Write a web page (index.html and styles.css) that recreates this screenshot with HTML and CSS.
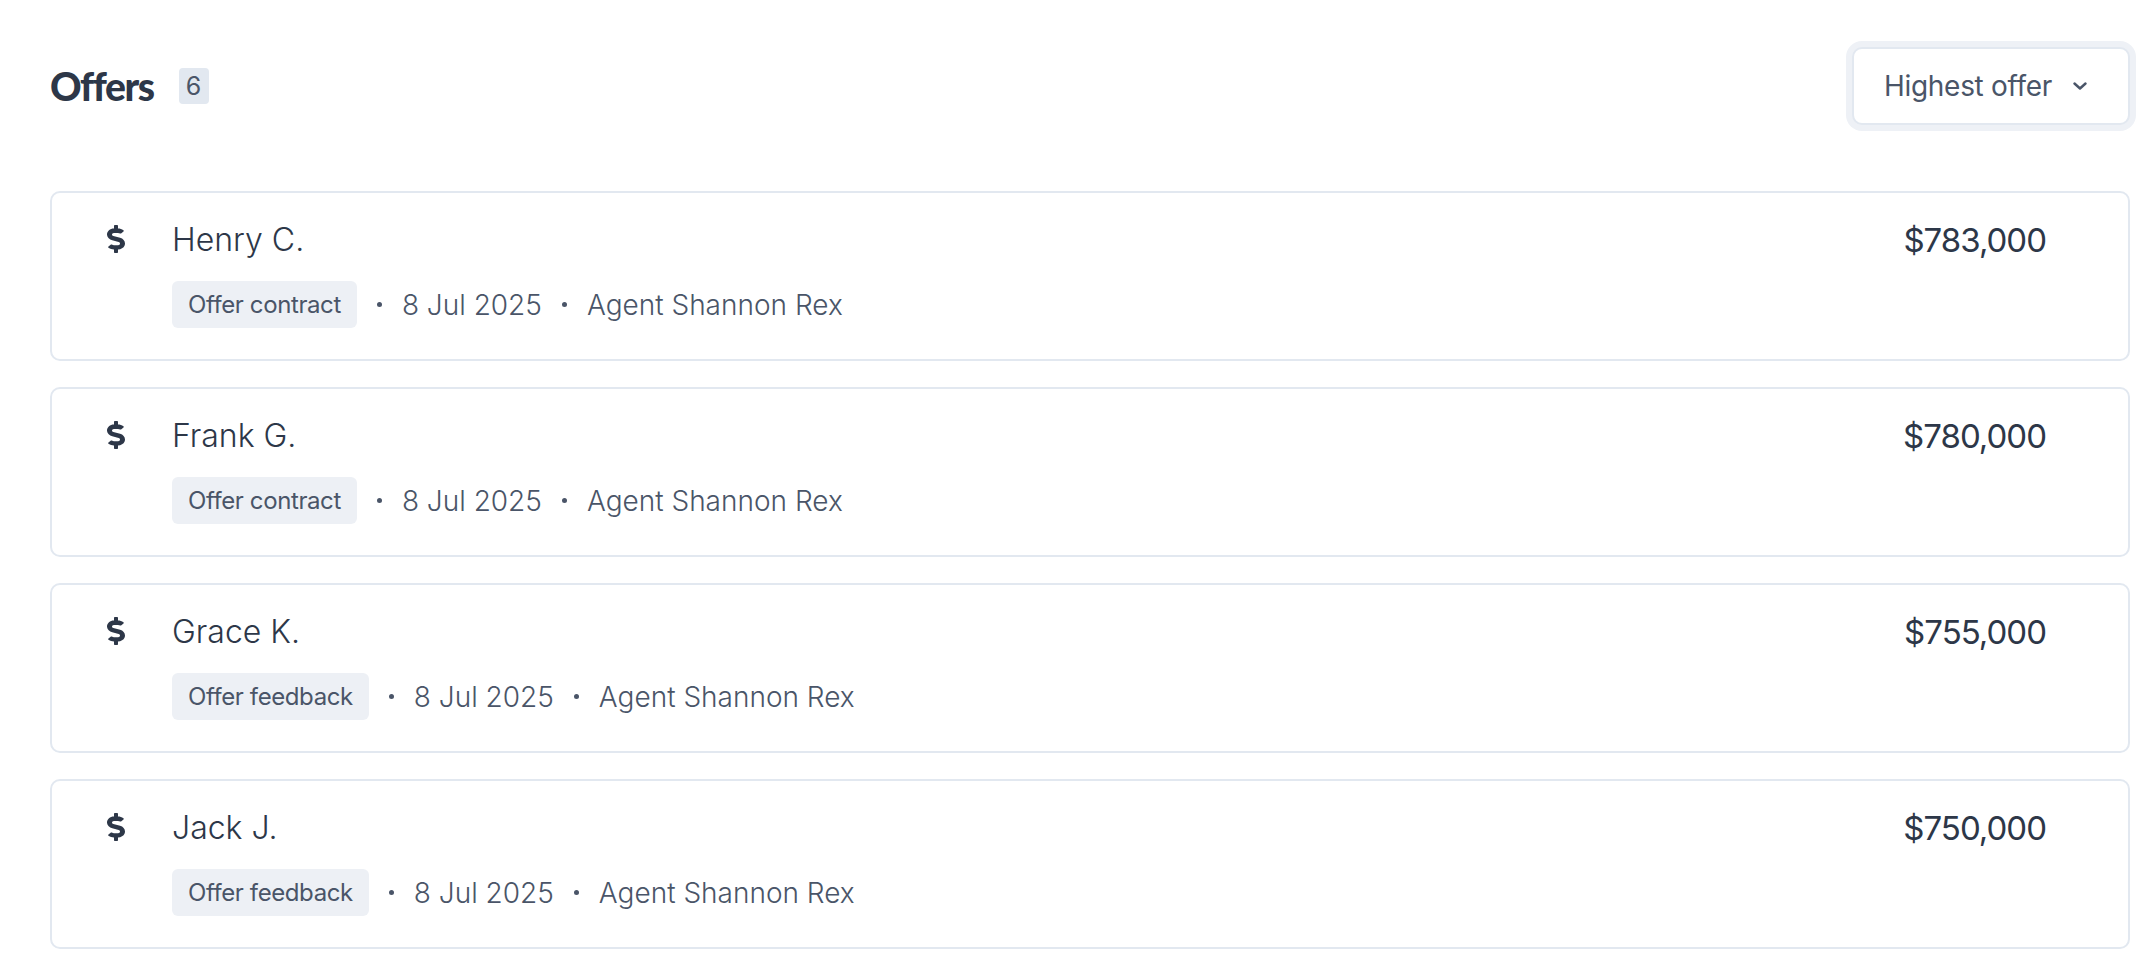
FILE: index.html
```html
<!DOCTYPE html>
<html lang="en">
<head>
    <meta charset="UTF-8">
    <meta name="viewport" content="width=device-width, initial-scale=1.0">
    <title>Offers</title>
    <link rel="stylesheet" href="styles.css">
</head>
<body>
    <div class="offers">
        <div class="offers-header">
            <div class="offers-title">
                <h1>Offers</h1>
                <span class="count">6</span>
            </div>
            <button class="sort-btn">
                <span>Highest offer</span>
                <svg class="chevron" viewBox="0 0 14 8" width="14" height="8">
                    <path d="M1.5 1.5 L7 6.5 L12.5 1.5" fill="none" stroke="currentColor" stroke-width="2.4" stroke-linecap="round" stroke-linejoin="round"/>
                </svg>
            </button>
        </div>

        <div class="offer-list">
            <div class="offer-card">
                <svg class="offer-icon" viewBox="0 0 288 512" width="18" height="28" preserveAspectRatio="none">
                    <path d="M209.2 233.4l-108-31.6C88.7 198.2 80 186.5 80 173.5c0-16.3 13.2-29.5 29.5-29.5h66.3c12.2 0 24.2 3.7 34.2 10.5 6.1 4.1 14.3 3.1 19.5-2l34.8-34c7.1-6.9 6.1-18.4-1.8-24.5C238 74.8 207.4 64.1 176 64V16c0-8.8-7.2-16-16-16h-32c-8.8 0-16 7.2-16 16v48h-2.5C45.8 64-5.4 118.700.5 183.6c4.2 46.1 39.4 83.6 83.8 96.6l102.5 30c12.5 3.7 21.2 15.3 21.2 28.3 0 16.3-13.2 29.5-29.5 29.5h-66.3C100 368 88 364.3 78 357.5c-6.1-4.1-14.3-3.1-19.5 2l-34.8 34c-7.1 6.9-6.1 18.4 1.8 24.5 24.5 19.200 55.1 29.9 86.5 30v48c0 8.8 7.2 16 16 16h32c8.8 0 16-7.2 16-16v-48.2c46.6-.9 90.3-28.6 105.7-72.7 21.5-61.6-14.6-124.8-72.5-141.7z" fill="currentColor"/>
                </svg>
                <div class="offer-body">
                    <div class="offer-name">Henry C.</div>
                    <div class="offer-meta">
                        <span class="tag">Offer contract</span>
                        <span class="dot"></span>
                        <span>8 Jul 2025</span>
                        <span class="dot"></span>
                        <span>Agent Shannon Rex</span>
                    </div>
                </div>
                <div class="offer-amount">$783,000</div>
            </div>

            <div class="offer-card">
                <svg class="offer-icon" viewBox="0 0 288 512" width="18" height="28" preserveAspectRatio="none">
                    <path d="M209.2 233.4l-108-31.6C88.7 198.2 80 186.5 80 173.5c0-16.3 13.2-29.5 29.5-29.5h66.3c12.2 0 24.2 3.7 34.2 10.5 6.1 4.1 14.3 3.1 19.5-2l34.8-34c7.1-6.9 6.1-18.4-1.8-24.5C238 74.8 207.4 64.1 176 64V16c0-8.8-7.2-16-16-16h-32c-8.8 0-16 7.2-16 16v48h-2.5C45.8 64-5.4 118.700.5 183.6c4.2 46.1 39.4 83.6 83.8 96.6l102.5 30c12.5 3.7 21.2 15.3 21.2 28.3 0 16.3-13.2 29.5-29.5 29.5h-66.3C100 368 88 364.3 78 357.5c-6.1-4.1-14.3-3.1-19.5 2l-34.8 34c-7.1 6.9-6.1 18.4 1.8 24.5 24.5 19.200 55.1 29.9 86.5 30v48c0 8.8 7.2 16 16 16h32c8.8 0 16-7.2 16-16v-48.2c46.6-.9 90.3-28.6 105.7-72.7 21.5-61.6-14.6-124.8-72.5-141.7z" fill="currentColor"/>
                </svg>
                <div class="offer-body">
                    <div class="offer-name">Frank G.</div>
                    <div class="offer-meta">
                        <span class="tag">Offer contract</span>
                        <span class="dot"></span>
                        <span>8 Jul 2025</span>
                        <span class="dot"></span>
                        <span>Agent Shannon Rex</span>
                    </div>
                </div>
                <div class="offer-amount">$780,000</div>
            </div>

            <div class="offer-card">
                <svg class="offer-icon" viewBox="0 0 288 512" width="18" height="28" preserveAspectRatio="none">
                    <path d="M209.2 233.4l-108-31.6C88.7 198.2 80 186.5 80 173.5c0-16.3 13.2-29.5 29.5-29.5h66.3c12.2 0 24.2 3.7 34.2 10.5 6.1 4.1 14.3 3.1 19.5-2l34.8-34c7.1-6.9 6.1-18.4-1.8-24.5C238 74.8 207.4 64.1 176 64V16c0-8.8-7.2-16-16-16h-32c-8.8 0-16 7.2-16 16v48h-2.5C45.8 64-5.4 118.700.5 183.6c4.2 46.1 39.4 83.6 83.8 96.6l102.5 30c12.5 3.7 21.2 15.3 21.2 28.3 0 16.3-13.2 29.5-29.5 29.5h-66.3C100 368 88 364.3 78 357.5c-6.1-4.1-14.3-3.1-19.5 2l-34.8 34c-7.1 6.9-6.1 18.4 1.8 24.5 24.5 19.200 55.1 29.9 86.5 30v48c0 8.8 7.2 16 16 16h32c8.8 0 16-7.2 16-16v-48.2c46.6-.9 90.3-28.6 105.7-72.7 21.5-61.6-14.6-124.8-72.5-141.7z" fill="currentColor"/>
                </svg>
                <div class="offer-body">
                    <div class="offer-name">Grace K.</div>
                    <div class="offer-meta">
                        <span class="tag">Offer feedback</span>
                        <span class="dot"></span>
                        <span>8 Jul 2025</span>
                        <span class="dot"></span>
                        <span>Agent Shannon Rex</span>
                    </div>
                </div>
                <div class="offer-amount">$755,000</div>
            </div>

            <div class="offer-card">
                <svg class="offer-icon" viewBox="0 0 288 512" width="18" height="28" preserveAspectRatio="none">
                    <path d="M209.2 233.4l-108-31.6C88.7 198.2 80 186.5 80 173.5c0-16.3 13.2-29.5 29.5-29.5h66.3c12.2 0 24.2 3.7 34.2 10.5 6.1 4.1 14.3 3.1 19.5-2l34.8-34c7.1-6.9 6.1-18.4-1.8-24.5C238 74.8 207.4 64.1 176 64V16c0-8.8-7.2-16-16-16h-32c-8.8 0-16 7.2-16 16v48h-2.5C45.8 64-5.4 118.700.5 183.6c4.2 46.1 39.4 83.6 83.8 96.6l102.5 30c12.5 3.7 21.2 15.3 21.2 28.3 0 16.3-13.2 29.5-29.5 29.5h-66.3C100 368 88 364.3 78 357.5c-6.1-4.1-14.3-3.1-19.5 2l-34.8 34c-7.1 6.9-6.1 18.4 1.8 24.5 24.5 19.200 55.1 29.9 86.5 30v48c0 8.8 7.2 16 16 16h32c8.8 0 16-7.2 16-16v-48.2c46.6-.9 90.3-28.6 105.7-72.7 21.5-61.6-14.6-124.8-72.5-141.7z" fill="currentColor"/>
                </svg>
                <div class="offer-body">
                    <div class="offer-name">Jack J.</div>
                    <div class="offer-meta">
                        <span class="tag">Offer feedback</span>
                        <span class="dot"></span>
                        <span>8 Jul 2025</span>
                        <span class="dot"></span>
                        <span>Agent Shannon Rex</span>
                    </div>
                </div>
                <div class="offer-amount">$750,000</div>
            </div>
        </div>
    </div>
</body>
</html>
```

FILE: styles.css
```css
/* Base Reset */
* {
    margin: 0;
    padding: 0;
    box-sizing: border-box;
}

body {
    font-family: 'Inter', sans-serif;
    background: #fff;
    color: #2d3748;
    padding: 47px 26px 0 50px;
}

/* Header */
.offers-header {
    display: flex;
    justify-content: space-between;
    align-items: center;
    margin-bottom: 66px;
}

.offers-title {
    display: flex;
    align-items: center;
    gap: 25px;
}

.offers-title h1 {
    font-family: 'Lato', sans-serif;
    font-weight: 900;
    font-size: 39px;
    line-height: 1;
    letter-spacing: -1.4px;
    color: #2d3748;
}

.count {
    display: flex;
    align-items: center;
    justify-content: center;
    width: 30px;
    height: 36px;
    border-radius: 4px;
    background: #e2e8f0;
    color: #4a5568;
    font-size: 25px;
}

/* Sort Dropdown */
.sort-btn {
    display: flex;
    align-items: center;
    gap: 21px;
    width: 278px;
    height: 78px;
    padding: 0 38px 0 30px;
    border: 2px solid #e2e8f0;
    border-radius: 10px;
    box-shadow: 0 0 0 6px #eef1f6;
    background: #fff;
    font-family: 'Inter', sans-serif;
    font-size: 28px;
    letter-spacing: -0.3px;
    white-space: nowrap;
    color: #4a5568;
    cursor: pointer;
}

.chevron {
    flex-shrink: 0;
    color: #4a5568;
}

/* Offer Cards */
.offer-list {
    display: flex;
    flex-direction: column;
    gap: 26px;
}

.offer-card {
    display: flex;
    align-items: flex-start;
    padding: 27px 82px 31px 55px;
    border: 2px solid #e2e8f0;
    border-radius: 10px;
}

.offer-icon {
    flex-shrink: 0;
    margin-top: 5px;
    margin-right: 47px;
    color: #2d3748;
}

.offer-body {
    flex: 1;
}

.offer-name {
    font-size: 32px;
    font-weight: 300;
    line-height: 40px;
    color: #2d3748;
}

.offer-meta {
    display: flex;
    align-items: center;
    gap: 20px;
    margin-top: 21px;
    font-size: 28px;
    font-weight: 300;
    color: #4a5568;
}

.tag {
    padding: 6px 16px;
    border-radius: 6px;
    background: #edf0f5;
    font-size: 24px;
    font-weight: 400;
    line-height: 35px;
    letter-spacing: -0.4px;
}

.dot {
    width: 5px;
    height: 5px;
    border-radius: 50%;
    background: #4a5568;
}

.offer-amount {
    font-size: 33px;
    line-height: 40px;
    letter-spacing: -1px;
    color: #2d3748;
}
```
